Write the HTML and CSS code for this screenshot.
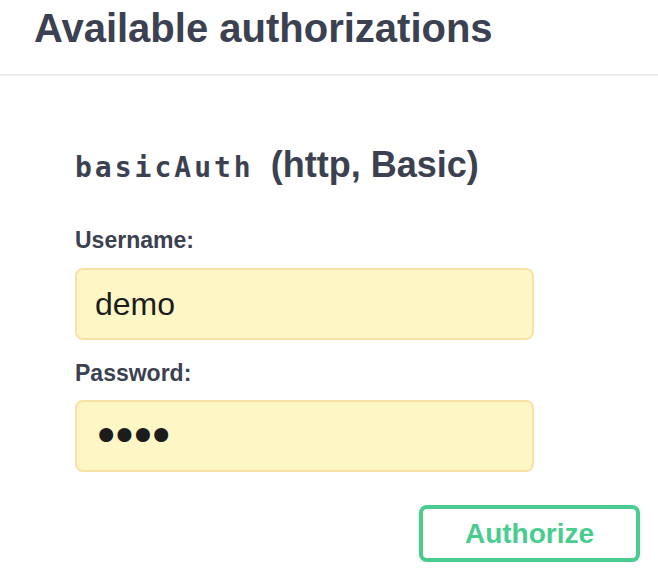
FILE: index.html
```html
<!DOCTYPE html>
<html>
<head>
<meta charset="utf-8">
<link rel="stylesheet" href="styles.css">
</head>
<body>
<div class="modal">
  <div class="modal-header">
    <h3 class="modal-title">Available authorizations</h3>
  </div>
  <div class="modal-content">
    <form class="auth-form">
      <h4 class="auth-title"><code class="scheme">basicAuth</code> (http, Basic)</h4>
      <label class="field-label" for="user">Username:</label>
      <input class="field-input" id="user" type="text" value="demo" readonly>
      <label class="field-label pw-label" for="pass">Password:</label>
      <input class="field-input pw-input" id="pass" type="password" value="demo" readonly>
      <div class="actions">
        <button class="btn-authorize" type="button">Authorize</button>
      </div>
    </form>
  </div>
</div>
</body>
</html>
```

FILE: styles.css
```css
html, body {
  margin: 0;
  padding: 0;
  background: #ffffff;
}

.modal {
  font-family: "Liberation Sans", Arial, sans-serif;
  color: #3b4151;
}

.modal-header {
  padding: 4px 0 22px 34px;
  border-bottom: 2px solid #ebebeb;
}

.modal-title {
  margin: 0;
  font-size: 40px;
  line-height: 48px;
  font-weight: 700;
  color: #3b4151;
}

.modal-content {
  padding: 72px 18px 0 75px;
}

.auth-form {
  display: flex;
  flex-direction: column;
  align-items: flex-start;
}

.auth-title {
  margin: 0 0 44px 0;
  height: 34px;
  font-size: 36px;
  line-height: 34px;
  font-weight: 700;
  color: #3b4151;
  white-space: nowrap;
}

.scheme {
  font-family: "DejaVu Sans Mono", monospace;
  font-weight: 700;
  font-size: 28px;
  line-height: 34px;
  letter-spacing: 3px;
  margin-right: 7px;
}

.field-label {
  display: block;
  font-size: 23px;
  line-height: 28px;
  font-weight: 700;
  color: #3b4151;
  margin-bottom: 14px;
}

.pw-label {
  margin-top: 19px;
  margin-bottom: 13px;
}

.field-input {
  box-sizing: border-box;
  width: 459px;
  height: 72px;
  margin: 0;
  padding: 0 18px;
  border: 2px solid #f8e0a6;
  border-radius: 8px;
  background: #fff6c6;
  font-family: "Liberation Sans", Arial, sans-serif;
  font-size: 32px;
  color: #1c1c1c;
  outline: none;
}

.pw-input {
  font-family: "DejaVu Sans", sans-serif;
  font-size: 48px;
  letter-spacing: -10px;
  padding-left: 15px;
}

.actions {
  align-self: stretch;
  display: flex;
  justify-content: flex-end;
  margin-top: 33px;
}

.btn-authorize {
  box-sizing: border-box;
  width: 221px;
  height: 57px;
  border: 4px solid #49cc90;
  border-radius: 8px;
  background: #ffffff;
  color: #49cc90;
  font-family: "Liberation Sans", Arial, sans-serif;
  font-size: 28px;
  font-weight: 700;
  padding: 0;
  box-shadow: 0 2px 4px rgba(0, 0, 0, 0.12);
  cursor: pointer;
}
```
